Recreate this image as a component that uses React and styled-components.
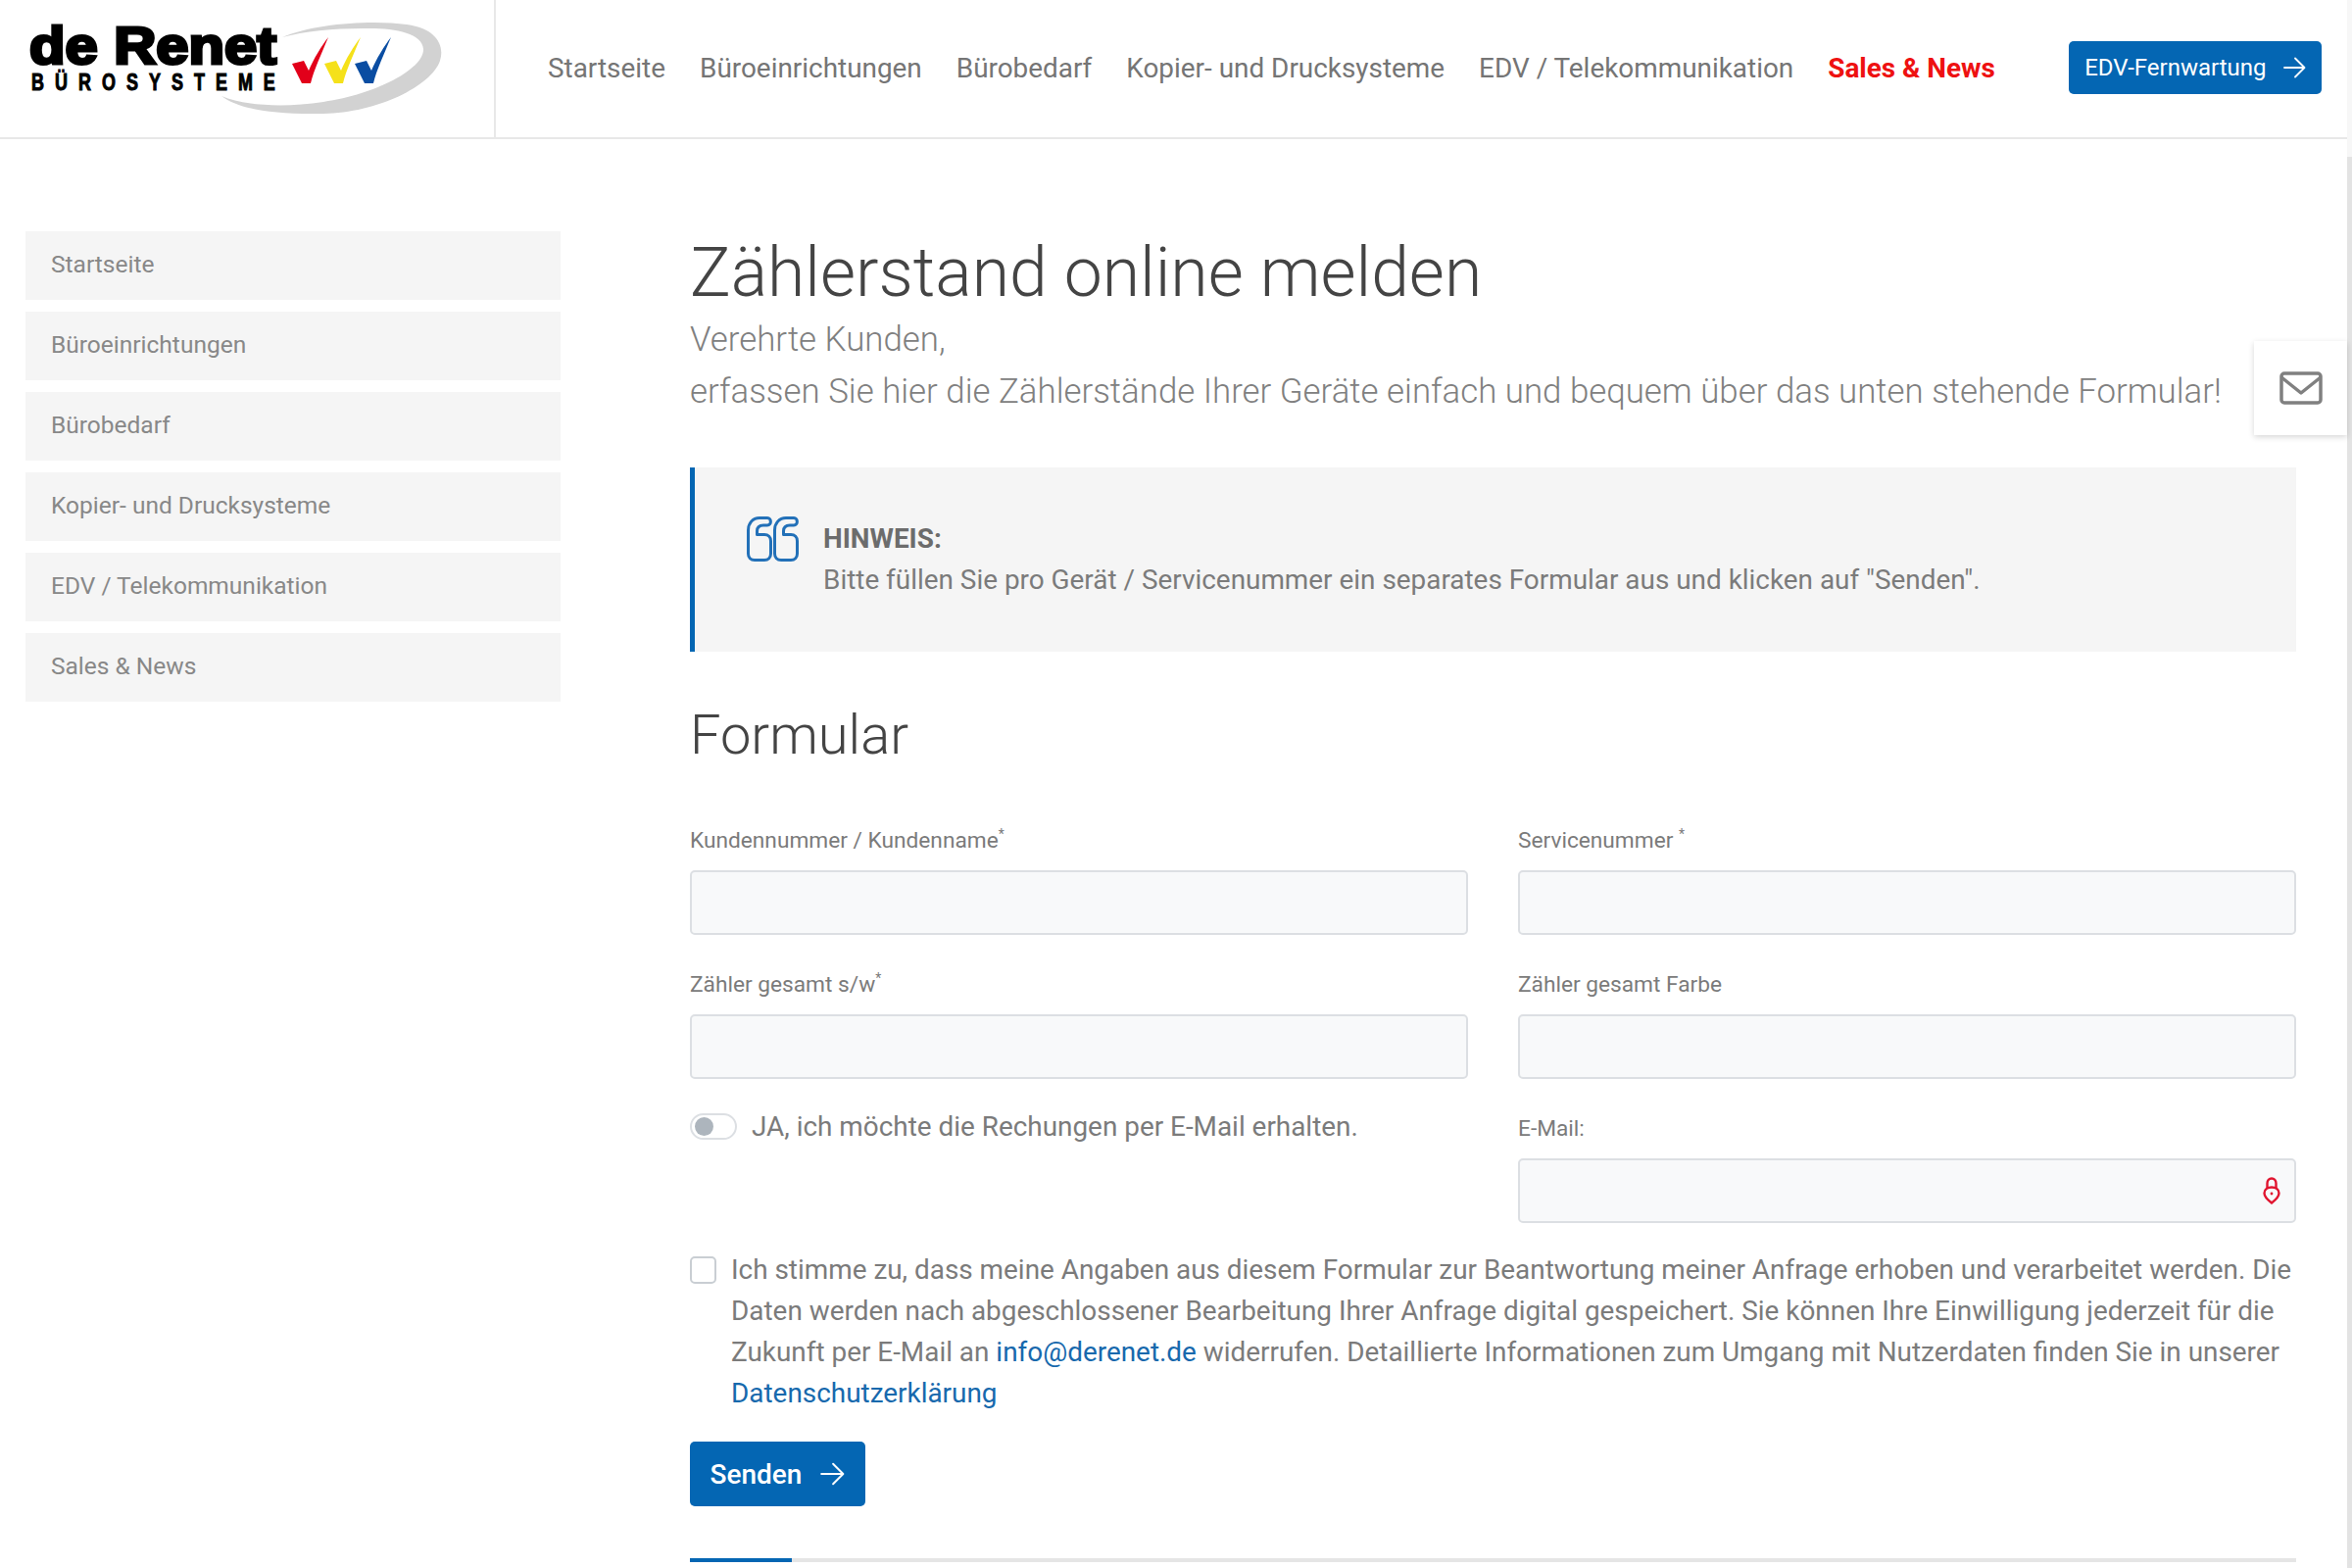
import React from 'react'
import styled, { createGlobalStyle } from 'styled-components'

const GlobalStyle = createGlobalStyle`
  html, body {
    margin: 0;
    padding: 0;
    background: #fff;
  }
  body {
    font-family: Roboto, "Liberation Sans", sans-serif;
    color: #7b7b7b;
  }
  * {
    box-sizing: border-box;
  }
`

const Shell = styled.div`
  display: flex;
  width: 2400px;
  height: 1600px;
  overflow: hidden;
`

const Page = styled.div`
  position: relative;
  flex: 1;
  min-width: 0;
`

const Scrollbar = styled.div`
  width: 5px;
  background: #f7f7f7;
  padding-top: 160px;
  &::after {
    content: '';
    display: block;
    height: 1440px;
    background: #e3e3e3;
  }
`

const Header = styled.header`
  display: flex;
  height: 142px;
  border-bottom: 2px solid #e8e8e8;
`

const LogoCell = styled.a`
  display: block;
  width: 506px;
  border-right: 2px solid #e8e8e8;
`

const Nav = styled.nav`
  flex: 1;
  display: flex;
  align-items: center;
  gap: 35px;
  padding: 0 26px 2px 53px;
`

const NavLink = styled.a`
  font-size: 27.9px;
  color: ${p => (p.$hot ? '#ee1111' : '#757575')};
  font-weight: ${p => (p.$hot ? 700 : 400)};
  white-space: nowrap;
`

const PrimaryButton = styled.a`
  display: inline-flex;
  align-items: center;
  justify-content: center;
  background: #0466b3;
  color: #fff;
  border-radius: 5px;
  font-size: ${p => (p.$big ? '28px' : '24px')};
  font-weight: ${p => (p.$big ? 500 : 400)};
  height: ${p => (p.$big ? '66px' : '54px')};
  width: ${p => (p.$big ? '179px' : '258px')};
  gap: ${p => (p.$big ? '18px' : '16px')};
  white-space: nowrap;
`

const NavButton = styled(PrimaryButton)`
  margin-left: 40px;
`

const Body = styled.div`
  display: grid;
  grid-template-columns: 546px 1639px;
  column-gap: 132px;
  padding: 94px 0 0 26px;
`

const SideList = styled.ul`
  list-style: none;
  margin: 0;
  padding: 0;
  display: flex;
  flex-direction: column;
  gap: 12px;
`

const SideItem = styled.li`
  display: flex;
  align-items: center;
  height: 70px;
  padding: 0 26px 4px;
  background: #f5f5f5;
  color: #888;
  font-size: 24.5px;
`

const Title = styled.h1`
  margin: 0;
  font-size: 69.7px;
  line-height: 84px;
  font-weight: 300;
  color: #444;
`

const Lead = styled.p`
  margin: 0;
  font-size: 34.85px;
  line-height: 53px;
  font-weight: 300;
  color: #808080;
`

const Callout = styled.div`
  display: flex;
  align-items: flex-start;
  gap: 25px;
  margin-top: 51px;
  height: 188px;
  padding: 50px 53px 0;
  background: #f5f5f5;
  border-left: 5px solid #0466b3;
`

const CalloutText = styled.div`
  padding-top: 2px;
  font-size: 27.9px;
  line-height: 42px;
  color: #7b7b7b;
  strong {
    display: block;
    font-weight: 700;
    color: #6c6c6c;
  }
`

const SectionTitle = styled.h2`
  margin: 52px 0 0;
  font-size: 56px;
  line-height: 66px;
  font-weight: 300;
  color: #444;
`

const FormGrid = styled.div`
  display: grid;
  grid-template-columns: 794px 794px;
  column-gap: 51px;
  row-gap: 34px;
  margin-top: 58px;
`

const Field = styled.div`
  display: flex;
  flex-direction: column;
`

const Label = styled.label`
  height: 30px;
  margin-bottom: 17px;
  font-size: 22.7px;
  line-height: 34px;
  color: #7b7b7b;
  sup {
    font-size: 14px;
    line-height: 0;
    vertical-align: 9px;
  }
`

const InputWrap = styled.div`
  position: relative;
`

const Input = styled.input`
  display: block;
  width: 100%;
  height: 66px;
  background: #f8f9fa;
  border: 2px solid #dcdfe3;
  border-radius: 5px;
  outline: none;
`

const LockBadge = styled.span`
  position: absolute;
  right: 16px;
  top: 19px;
  display: flex;
`

const ToggleRow = styled.div`
  display: flex;
  align-items: center;
  gap: 15px;
  height: 28px;
  font-size: 27.9px;
  color: #7b7b7b;
`

const Toggle = styled.span`
  display: flex;
  align-items: center;
  width: 48px;
  height: 27px;
  padding-left: 3px;
  border: 2px solid #dcdfe3;
  border-radius: 14px;
  background: #fff;
  &::before {
    content: '';
    width: 19px;
    height: 19px;
    border-radius: 50%;
    background: #adb5bd;
  }
`

const Consent = styled.div`
  display: flex;
  gap: 15px;
  margin-top: 27px;
  font-size: 27.9px;
  line-height: 42px;
  color: #7b7b7b;
  a {
    color: #1769ad;
  }
`

const Checkbox = styled.span`
  flex: none;
  width: 27px;
  height: 28px;
  margin-top: 7px;
  background: #fff;
  border: 2px solid #c9ced3;
  border-radius: 5px;
`

const SendRow = styled.div`
  margin-top: 28px;
`

const Divider = styled.div`
  height: 4px;
  margin-top: 53px;
  background: #e5e5e5;
  &::before {
    content: '';
    display: block;
    width: 104px;
    height: 100%;
    background: #0466b3;
  }
`

const MailTab = styled.div`
  position: absolute;
  top: 348px;
  right: 0;
  display: flex;
  align-items: center;
  justify-content: center;
  width: 95px;
  height: 96px;
  background: #fff;
  box-shadow: 0 2px 6px rgba(0, 0, 0, 0.16);
`

function Logo() {
  return (
    <svg width="504" height="140" viewBox="0 0 504 140">
      <path
        d="M288 38C320 24 380 20 415 25C445 29 454 46 449 62C440 88 385 115 330 116C280 117 245 112 226 98C250 108 290 110 330 104C385 96 433 70 432 50C431 33 400 28 370 29C340 29 310 32 288 38Z"
        fill="#d2d2d2"
      />
      <text
        x="30"
        y="65"
        fontFamily="Liberation Sans, sans-serif"
        fontWeight="700"
        fontSize="53"
        fill="#000"
        stroke="#000"
        strokeWidth="3.2"
        textLength="252"
        lengthAdjust="spacingAndGlyphs"
      >
        de Renet
      </text>
      <text
        transform="translate(32 92) scale(0.78 1)"
        fontFamily="Liberation Sans, sans-serif"
        fontWeight="700"
        fontSize="23"
        fill="#000"
        stroke="#000"
        strokeWidth="1"
        textLength="319"
      >
        BÜROSYSTEME
      </text>
      <path d="M298 65L310 62L315 72C320 60 328 47 335 38C328 55 320 72 317 85L308 85Z" fill="#e2001a" />
      <path d="M331 65L343 62L348 72C353 60 361 47 368 38C361 55 353 72 350 85L341 85Z" fill="#f5e11a" />
      <path d="M362 65L374 62L379 72C384 60 392 47 399 38C392 55 384 72 381 85L372 85Z" fill="#0a4da2" />
    </svg>
  )
}

function ArrowIcon({ size }) {
  return (
    <svg width={size} height={size} viewBox="0 0 24 24" fill="none" stroke="#fff" strokeWidth="1.8" strokeLinecap="round" strokeLinejoin="round">
      <path d="M2 12H22M13 2.5L22.5 12L13 21.5" />
    </svg>
  )
}

function QuoteIcon() {
  const glyph = 'M21 1.5H13C6 1.5 1.5 7 1.5 14V38C1.5 42 4 44.5 8 44.5H18C22 44.5 24.5 42 24.5 38V25C24.5 21 22 18.5 18 18.5H10.5V15C10.5 11 13 9 17 9H21C25.5 9 25.5 1.5 21 1.5Z'
  return (
    <svg width="53" height="46" viewBox="0 0 53 46" fill="none" stroke="#2270b8" strokeWidth="3" strokeLinejoin="round" style={{ flex: 'none' }}>
      <path d={glyph} />
      <path d={glyph} transform="translate(27 0)" />
    </svg>
  )
}

function MailIcon() {
  return (
    <svg width="44" height="34" viewBox="0 0 44 34" fill="none" stroke="#808080" strokeWidth="3.5" strokeLinejoin="round">
      <rect x="2" y="2" width="40" height="30" rx="3" />
      <path d="M2 6L22 22L42 6" />
    </svg>
  )
}

function LockIcon() {
  return (
    <svg width="18" height="28" viewBox="0 0 18 28" fill="none" stroke="#e0152f" strokeWidth="2.4">
      <path d="M4.5 11V6.5C4.5 3.5 6.5 1.5 9 1.5C11.5 1.5 13.5 3.5 13.5 6.5V11" />
      <path d="M9 26.5C4.5 23 1.5 20 1.5 16.5C1.5 12.5 5 10.5 9 10.5C13 10.5 16.5 12.5 16.5 16.5C16.5 20 13.5 23 9 26.5Z" />
      <circle cx="9" cy="17" r="1.4" fill="#e0152f" stroke="none" />
    </svg>
  )
}

const navItems = ['Startseite', 'Büroeinrichtungen', 'Bürobedarf', 'Kopier- und Drucksysteme', 'EDV / Telekommunikation']
const sideItems = [...navItems, 'Sales & News']

export default function App() {
  return (
    <Shell>
      <GlobalStyle />
      <Page>
        <Header>
          <LogoCell>
            <Logo />
          </LogoCell>
          <Nav>
            {navItems.map(item => (
              <NavLink key={item}>{item}</NavLink>
            ))}
            <NavLink $hot>Sales &amp; News</NavLink>
            <NavButton>
              EDV-Fernwartung
              <ArrowIcon size={24} />
            </NavButton>
          </Nav>
        </Header>

        <Body>
          <SideList>
            {sideItems.map(item => (
              <SideItem key={item}>{item}</SideItem>
            ))}
          </SideList>

          <main>
            <Title>Zählerstand online melden</Title>
            <Lead>Verehrte Kunden,</Lead>
            <Lead>erfassen Sie hier die Zählerstände Ihrer Geräte einfach und bequem über das unten stehende Formular!</Lead>

            <Callout>
              <QuoteIcon />
              <CalloutText>
                <strong>HINWEIS:</strong>
                Bitte füllen Sie pro Gerät / Servicenummer ein separates Formular aus und klicken auf "Senden".
              </CalloutText>
            </Callout>

            <SectionTitle>Formular</SectionTitle>

            <FormGrid>
              <Field>
                <Label>Kundennummer / Kundenname<sup>*</sup></Label>
                <Input />
              </Field>
              <Field>
                <Label>Servicenummer <sup>*</sup></Label>
                <Input />
              </Field>
              <Field>
                <Label>Zähler gesamt s/w<sup>*</sup></Label>
                <Input />
              </Field>
              <Field>
                <Label>Zähler gesamt Farbe</Label>
                <Input />
              </Field>
              <ToggleRow>
                <Toggle />
                JA, ich möchte die Rechungen per E-Mail erhalten.
              </ToggleRow>
              <Field>
                <Label>E-Mail:</Label>
                <InputWrap>
                  <Input />
                  <LockBadge>
                    <LockIcon />
                  </LockBadge>
                </InputWrap>
              </Field>
            </FormGrid>

            <Consent>
              <Checkbox />
              <div>
                Ich stimme zu, dass meine Angaben aus diesem Formular zur Beantwortung meiner Anfrage erhoben und verarbeitet werden. Die Daten werden nach abgeschlossener Bearbeitung Ihrer Anfrage digital gespeichert. Sie können Ihre Einwilligung jederzeit für die Zukunft per E-Mail an <a>info@derenet.de</a> widerrufen. Detaillierte Informationen zum Umgang mit Nutzerdaten finden Sie in unserer <a>Datenschutzerklärung</a>
              </div>
            </Consent>

            <SendRow>
              <PrimaryButton $big>
                Senden
                <ArrowIcon size={26} />
              </PrimaryButton>
            </SendRow>

            <Divider />
          </main>
        </Body>

        <MailTab>
          <MailIcon />
        </MailTab>
      </Page>
      <Scrollbar />
    </Shell>
  )
}
